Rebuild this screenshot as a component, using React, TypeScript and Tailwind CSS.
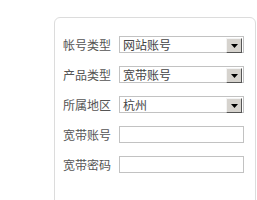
import React from "react";

const font = { fontFamily: '"Noto Sans CJK SC", "Noto Sans", sans-serif' };

function DropButton() {
  return (
    <div className="absolute right-[1px] top-[1px] w-[16px] h-[15px] bg-[#d6d3ce] border border-t-[#f4f4f4] border-l-[#f4f4f4] border-r-[#555] border-b-[#555] flex items-center justify-center">
      <svg width="7" height="4" viewBox="0 0 7 4">
        <polygon points="0,0 7,0 3.5,4" fill="#000" />
      </svg>
    </div>
  );
}

function Row({ label, value, select }: { label: string; value?: string; select?: boolean }) {
  return (
    <div className="flex items-center h-[17px]">
      <span className="w-[56px] text-[12px] leading-none text-[#555]">{label}</span>
      <div className="relative w-[125px] h-[17px] border border-[#c2c2c2] bg-white flex items-center pl-[3px]">
        <span className="text-[12px] leading-none text-[#444]">{value}</span>
        {select && <DropButton />}
      </div>
    </div>
  );
}

export default function App() {
  return (
    <div className="w-[257px] h-[200px] overflow-hidden bg-white pl-[54px] pt-[17px]" style={font}>
      <div className="w-[202px] h-[220px] border border-[#dcdcdc] rounded-[6px] pl-[8px] pt-[18px] flex flex-col gap-[13px]">
        <Row label="帐号类型" value="网站账号" select />
        <Row label="产品类型" value="宽带账号" select />
        <Row label="所属地区" value="杭州" select />
        <Row label="宽带账号" />
        <Row label="宽带密码" />
      </div>
    </div>
  );
}
